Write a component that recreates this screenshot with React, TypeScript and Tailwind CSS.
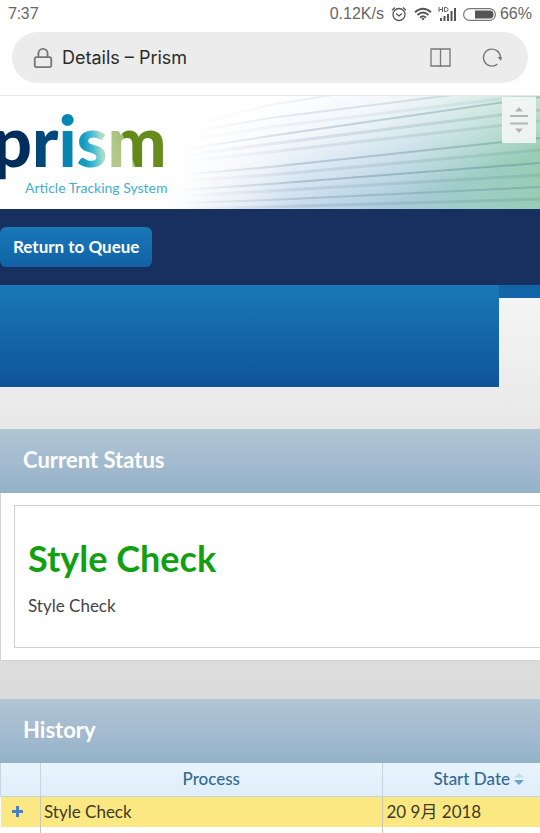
import React from 'react';
import { Lock } from 'lucide-react';

const historyRows = [
  { id: 1, process: 'Style Check', startDate: '20 9月 2018', active: true },
  { id: 2, process: '', startDate: '20 9月 2018', active: false },
];

// y at the left, middle and right of the banner, stroke width, opacity
const bannerLines = [
  { left: 32, middle: 9, right: -34, width: 2, opacity: 0.18 },
  { left: 38, middle: 22, right: -12, width: 2, opacity: 0.3 },
  { left: 46, middle: 31, right: -2, width: 3, opacity: 0.15 },
  { left: 54, middle: 40, right: 1, width: 2, opacity: 0.5 },
  { left: 60, middle: 48, right: 14, width: 3, opacity: 0.3 },
  { left: 66, middle: 56, right: 25, width: 3, opacity: 0.25 },
  { left: 79, middle: 71, right: 42, width: 2, opacity: 0.6 },
  { left: 85, middle: 79, right: 54, width: 3, opacity: 0.3 },
  { left: 94, middle: 88, right: 67, width: 2, opacity: 0.7 },
  { left: 100, middle: 95, right: 79, width: 3, opacity: 0.35 },
  { left: 107, middle: 104, right: 91, width: 2, opacity: 0.6 },
  { left: 113, middle: 111, right: 103, width: 3, opacity: 0.4 },
];

function StatusBar() {
  return (
    <div className="flex h-7 items-center justify-between px-2 text-base text-[#666]">
      <span className="font-['Roboto',sans-serif]">7:37</span>
      <div className="flex items-center gap-1.5 font-['Liberation_Sans',sans-serif]">
        <span>0.12K/s</span>
        <svg width="18" height="16" viewBox="0 0 16 16" fill="none" stroke="#555" strokeWidth="1.3">
          <circle cx="8" cy="8.5" r="6" />
          <path d="M5 7.5 8 10l3-2.5M1 4.2 4 1.4M15 4.2 12 1.4" />
        </svg>
        <svg width="18" height="14" viewBox="0 0 18 14" fill="none" stroke="#555" strokeWidth="1.8">
          <path d="M1 5.2Q9-1.8 17 5.2M3.5 8Q9 3 14.5 8M6 10.6Q9 8 12 10.6" />
          <path d="M7.3 11.8 9 13.4l1.7-1.6Q9 10.4 7.3 11.8Z" fill="#555" stroke="none" />
        </svg>
        <svg width="19" height="15" viewBox="0 0 19 15">
          <path d="M1 0v5M4.500 0v5M1 2.500h3.500M6.500.5v4M6.500.5h1.500q2 0 2 2t-2 2H6.500" fill="none" stroke="#666" />
          <path d="M2 11h2v3H2zM5.500 9h2v5h-2zM9 7h2v7H9zM12.500 4h2v10h-2zM16 1h2v13h-2z" fill="#555" />
        </svg>
        <div className="flex items-center gap-1">
          <svg width="33" height="13" viewBox="0 0 33 13">
            <rect x="0.600" y="0.600" width="31.800" height="11.800" rx="5.900" fill="#fff" stroke="#777" strokeWidth="1.200" />
            <path d="M12 2.500h15q3.500 0 3.500 4t-3.500 4H12z" fill="#555" />
          </svg>
          <span>66%</span>
        </div>
      </div>
    </div>
  );
}

function AddressBar() {
  return (
    <div className="px-3 pt-1 pb-3">
      <div className="flex h-[51px] items-center rounded-full bg-[#ececec] pr-6 pl-5">
        <Lock className="mr-2 size-[22px] text-[#777]" strokeWidth={2} />
        <span className="flex-1 font-['Inter',sans-serif] text-lg text-[#2b2b2b]">Details – Prism</span>
        <button aria-label="Reading mode" className="mr-7">
          <svg width="22" height="22" viewBox="0 0 22 22" fill="none" stroke="#777" strokeWidth="1.300">
            <path d="M1 2h19v17H1zM10.500 2v18" />
          </svg>
        </button>
        <button aria-label="Reload">
          <svg width="24" height="22" viewBox="0 0 24 22" fill="none" stroke="#777" strokeWidth="1.300">
            <path d="M17.500 17A8.500 8.500 0 1 1 20.400 10" />
            <path d="M17.500 10h4.500L21 14z" fill="#777" stroke="none" />
          </svg>
        </button>
      </div>
    </div>
  );
}

function Banner() {
  return (
    <header className="relative h-[114px] overflow-hidden border-t border-[#e8e8e8] bg-white">
      <svg className="absolute inset-0 size-full" viewBox="0 0 540 113" preserveAspectRatio="none">
        <defs>
          <linearGradient id="sweep" x1="0" x2="1" y1="0" y2="0">
            <stop offset="0.3" stopColor="#fff" />
            <stop offset="0.4" stopColor="#dfe8f1" />
            <stop offset="0.54" stopColor="#b0cbe6" />
            <stop offset="0.72" stopColor="#a8cbdc" />
            <stop offset="0.85" stopColor="#9fcdc9" />
            <stop offset="1" stopColor="#98cdb4" />
          </linearGradient>
          <linearGradient id="fade" gradientUnits="userSpaceOnUse" x1="340" x2="390" y1="-20" y2="113">
            <stop offset="0" stopColor="#fff" />
            <stop offset="0.3" stopColor="#fff" stopOpacity="0.85" />
            <stop offset="0.65" stopColor="#fff" stopOpacity="0.45" />
            <stop offset="1" stopColor="#fff" stopOpacity="0" />
          </linearGradient>
          <linearGradient id="line" gradientUnits="userSpaceOnUse" x1="180" x2="540" y1="0" y2="0">
            <stop offset="0" stopColor="#9cacc0" stopOpacity="0" />
            <stop offset="0.35" stopColor="#8ba1b8" stopOpacity="0.8" />
            <stop offset="1" stopColor="#6fa39c" />
          </linearGradient>
        </defs>
        <rect width="540" height="113" fill="url(#sweep)" />
        <rect width="540" height="113" fill="url(#fade)" />
        {bannerLines.map(line => (
          <path
            key={line.left}
            d={`M180 ${line.left}L270 ${line.middle}L540 ${line.right}`}
            fill="none"
            stroke="url(#line)"
            strokeWidth={line.width}
            opacity={line.opacity}
          />
        ))}
      </svg>
      <svg className="absolute top-0 left-0" width="200" height="113" viewBox="0 0 200 113">
        <defs>
          <linearGradient id="letterS" x1="0" x2="1" y1="0.1" y2="0" gradientUnits="userSpaceOnUse" gradientTransform="translate(79 0) scale(29)">
            <stop offset="0" stopColor="#149ac0" />
            <stop offset="0.35" stopColor="#4dc0d4" />
            <stop offset="0.6" stopColor="#a5dbc6" />
            <stop offset="1" stopColor="#d6e6a6" />
          </linearGradient>
          <linearGradient id="letterM" gradientUnits="userSpaceOnUse" x1="118" x2="148" y1="68" y2="56">
            <stop offset="0" stopColor="#b3c98a" />
            <stop offset="0.46" stopColor="#a6bf78" />
            <stop offset="0.48" stopColor="#61871a" />
            <stop offset="1" stopColor="#678b1c" />
          </linearGradient>
        </defs>
        <text x="-8" y="71" fontSize="70" className="font-['Lato',sans-serif] font-black">
          <tspan fill="#002d5c">p</tspan>
          <tspan fill="#00477a">r</tspan>
          <tspan fill="#0785b3">i</tspan>
          <tspan fill="url(#letterS)">s</tspan>
          <tspan fill="url(#letterM)">m</tspan>
        </text>
        <text x="25" y="97" fontSize="14" fill="#46acd0" className="font-['Lato',sans-serif]">Article Tracking System</text>
      </svg>
      <button aria-label="Scroll" className="absolute top-px right-1 flex h-[46px] w-[34px] items-center justify-center bg-[#f4f7f5]/90">
        <svg width="18" height="28" viewBox="0 0 18 28">
          <path d="M5 5.500 9 1l4 4.500zM5 22.500 9 27l4-4.500z" fill="#b5b5b5" />
          <path d="M0 10h18M0 17.500h18" stroke="#b0b8b4" strokeWidth="2" />
        </svg>
      </button>
    </header>
  );
}

function SectionTitle({ children }: { children: React.ReactNode }) {
  return (
    <h2 className="flex h-16 items-center bg-linear-to-b from-[#b0c6d4] via-[#a4bbd0] to-[#93b2c6] px-[23px] pb-1 text-[22px] font-bold text-white">
      {children}
    </h2>
  );
}

function SortIcon() {
  return (
    <svg width="10" height="14" viewBox="0 0 10 14">
      <path d="M0 5.500 5 1l5 4.500z" fill="#c5dce9" />
      <path d="M0 8h10l-5 5z" fill="#6ba2c5" />
    </svg>
  );
}

export default function App() {
  return (
    <div className="flex h-screen flex-col overflow-hidden bg-white font-['Lato','Noto_Sans_CJK_SC',sans-serif] *:shrink-0">
      <StatusBar />
      <AddressBar />
      <Banner />
      <nav className="flex h-[76px] items-center bg-[#17305f]">
        <button className="h-10 rounded-md bg-linear-to-b from-[#1878b8] to-[#1262a5] px-[13px] text-[17px] font-bold text-white">
          Return to Queue
        </button>
      </nav>
      <main className="bg-linear-to-b from-[#f6f6f6] via-[#e2e2e2] via-35% to-[#d5d5d5]">
        <div className="flex h-36 items-start">
          <div className="h-[102px] flex-1 bg-linear-to-b from-[#1a78b7] to-[#0f549b]" />
          <div className="h-[13px] w-[41px] bg-[#1265a8]" />
        </div>

        <section>
          <SectionTitle>Current Status</SectionTitle>
          <div className="border-b border-l border-[#d4d4d4] bg-white py-3 pl-[13px]">
            <div className="h-[143px] border border-r-0 border-[#d0d0d0] px-[13px] pt-7">
              <h1 className="text-[36px] leading-[48px] font-bold text-[#10a010]">Style Check</h1>
              <p className="mt-3 text-[17px] leading-6 text-[#444]">Style Check</p>
            </div>
          </div>
        </section>

        <section className="mt-[38px]">
          <SectionTitle>History</SectionTitle>
          <table className="w-full table-fixed border-collapse bg-white text-[17px] leading-6">
            <colgroup>
              <col className="w-10" />
              <col />
              <col className="w-[158px]" />
            </colgroup>
            <thead>
              <tr className="h-[33px] bg-linear-to-b from-[#e9f4fc] to-[#dfeefa] text-[#316b95]">
                <th className="border border-t-0 border-[#c8d4dc]" aria-label="Expand" />
                <th className="border border-t-0 border-[#c8d4dc] p-0 font-medium">Process</th>
                <th className="border border-t-0 border-r-0 border-[#c8d4dc] p-0 font-medium">
                  <span className="flex items-center justify-end gap-1 pr-4">
                    Start Date <SortIcon />
                  </span>
                </th>
              </tr>
            </thead>
            <tbody>
              {historyRows.map(row => (
                <tr key={row.id} className={row.active ? 'h-[31px] bg-[#fce883] text-[#3e3a24]' : 'h-[31px] bg-white text-black'}>
                  <td className="border-r border-[#c8c8b0] p-0">
                    {row.active && (
                      <button aria-label="Expand row" className="block pl-[11px]">
                        <svg width="11" height="11" viewBox="0 0 11 11" stroke="#4c7fca" strokeWidth="3">
                          <path d="M5.500 0v11M0 5.500h11" />
                        </svg>
                      </button>
                    )}
                  </td>
                  <td className="border-r border-[#c8c8b0] px-[3px] py-0">{row.process}</td>
                  <td className="px-1 py-0">{row.startDate}</td>
                </tr>
              ))}
            </tbody>
          </table>
        </section>
      </main>
    </div>
  );
}
